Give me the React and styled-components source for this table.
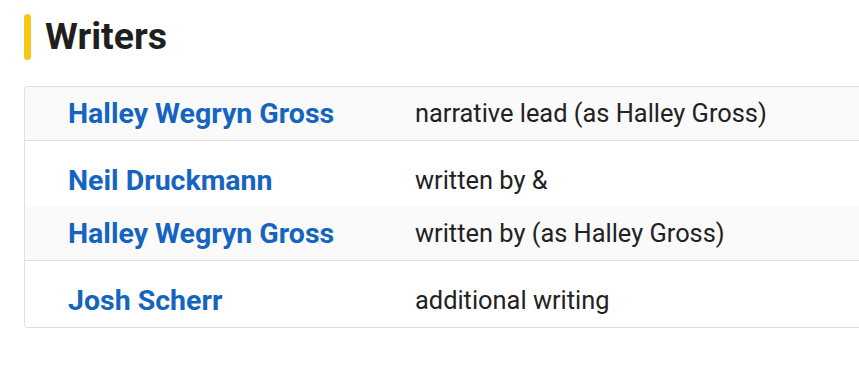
import React from "react";
import styled, { createGlobalStyle } from "styled-components";

const Global = createGlobalStyle`
  html, body { margin: 0; padding: 0; background: #ffffff; overflow: hidden; }
  body { font-family: Roboto, "Noto Sans", "Liberation Sans", sans-serif; color: #212121; }
`;

const Page = styled.main`
  padding: 14px 0 0 24px;
`;

const Heading = styled.h2`
  display: flex;
  align-items: center;
  gap: 14px;
  margin: 0 0 26px;
  height: 46px;
  font-size: 37.5px;
  font-weight: 700;
  line-height: 1;
  color: #1f1f1f;
  &::before {
    content: "";
    width: 7px;
    align-self: stretch;
    border-radius: 4px;
    background: #f5c518;
  }
`;

const Table = styled.div`
  border: 1px solid #e0e0e0;
  border-right: none;
  border-radius: 4px 0 0 4px;
  margin-right: -4px;
  overflow: hidden;
`;

const Group = styled.div`
  & + & { border-top: 1px solid #e0e0e0; }
`;

const Row = styled.div`
  display: grid;
  grid-template-columns: 390px 1fr;
  align-items: center;
  height: ${(p) => (p.$spaced ? 66 : 53)}px;
  box-sizing: border-box;
  padding-top: ${(p) => (p.$spaced ? 13 : 0)}px;
  background: ${(p) => (p.$shaded ? "#fafafa" : "#ffffff")};
`;

const Name = styled.a`
  padding-left: 43px;
  font-size: 28.5px;
  font-weight: 700;
  color: #1565c0;
  text-decoration: none;
  white-space: nowrap;
`;

const Role = styled.span`
  font-size: 25.4px;
  color: #222222;
  white-space: nowrap;
  margin-top: -2px;
`;

const groups = [
  [{ name: "Halley Wegryn Gross", role: "narrative lead (as Halley Gross)" }],
  [
    { name: "Neil Druckmann", role: "written by &" },
    { name: "Halley Wegryn Gross", role: "written by (as Halley Gross)" },
  ],
  [{ name: "Josh Scherr", role: "additional writing" }],
];

export default function App() {
  let idx = 0;
  return (
    <>
      <Global />
      <Page>
        <Heading>Writers</Heading>
        <Table>
          {groups.map((g, gi) => (
            <Group key={gi}>
              {g.map((r, ri) => {
                const shaded = idx++ % 2 === 0;
                return (
                  <Row key={ri} $shaded={shaded} $spaced={gi > 0 && ri === 0}>
                    <Name href="#">{r.name}</Name>
                    <Role>{r.role}</Role>
                  </Row>
                );
              })}
            </Group>
          ))}
        </Table>
      </Page>
    </>
  );
}
